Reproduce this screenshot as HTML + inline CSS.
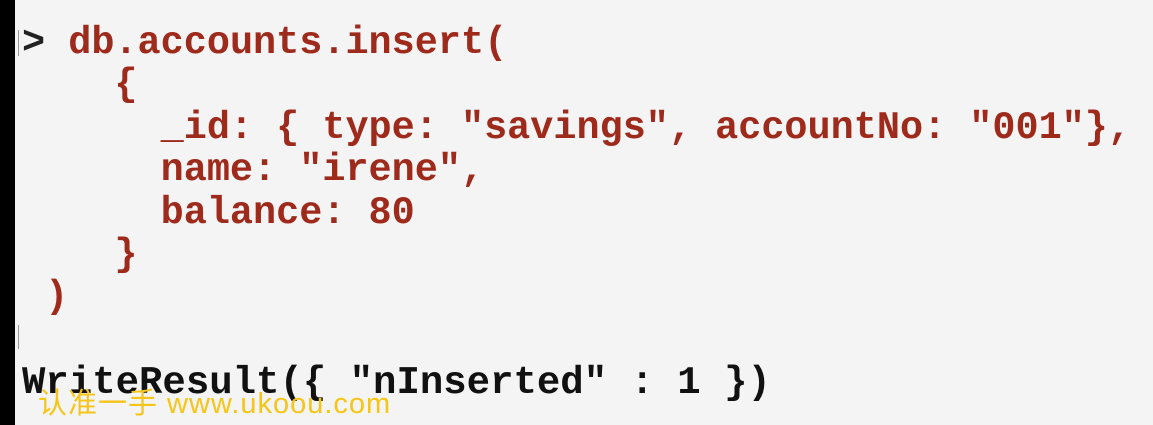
<!DOCTYPE html>
<html><head><style>
body{margin:0;width:1153px;height:425px;background:#f4f4f4;overflow:hidden;position:relative}
.bar{position:absolute;left:0;top:0;width:15px;height:425px;background:#000}
pre{position:absolute;left:22px;top:22px;margin:0;font-family:"Liberation Mono",monospace;font-weight:bold;font-size:38.5px;line-height:42.4px;color:#9e2a1c}
.res{position:absolute;left:22px;top:362px;margin:0;font-family:"Liberation Mono",monospace;font-weight:bold;font-size:39px;color:#111}
.p{color:#222}
.cur{position:absolute;left:18px;width:1px;background:#999}
.wm{position:absolute;left:38px;top:380px;font-family:"Liberation Sans","Noto Sans CJK SC",sans-serif;font-size:29px;color:#f5c518;letter-spacing:1px}
</style></head><body>
<div class="bar"></div>
<div class="cur" style="top:30px;height:26px"></div>
<div class="cur" style="top:325px;height:24px"></div>
<pre><span class="p">&gt;</span> db.accounts.insert(
    {
      _id: { type: "savings", accountNo: "001"},
      name: "irene",
      balance: 80
    }
 )</pre>
<pre class="res">WriteResult({ "nInserted" : 1 })</pre>
<div class="wm">认准一手 www.ukoou.com</div>
</body></html>
